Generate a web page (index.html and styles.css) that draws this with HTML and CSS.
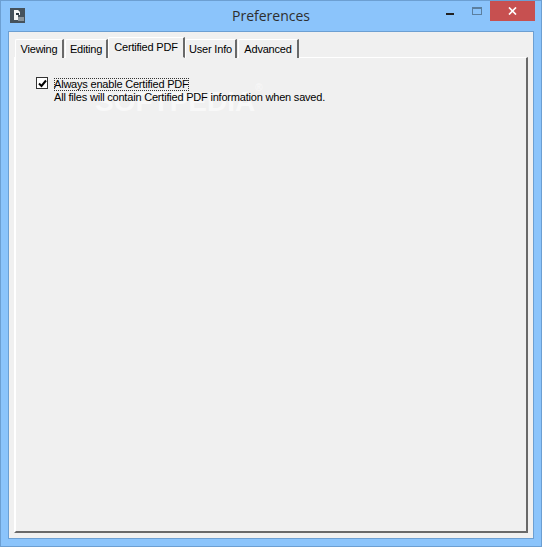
FILE: index.html
```html
<!DOCTYPE html>
<html lang="en">
<head>
    <meta charset="UTF-8">
    <meta name="viewport" content="width=device-width, initial-scale=1.0">
    <title>Preferences</title>
    <link rel="stylesheet" href="styles.css">
</head>
<body>
    <div class="window">
        <!-- Title bar -->
        <div class="titlebar">
            <svg class="app-icon" width="15" height="15" viewBox="0 0 15 15">
                <rect width="15" height="15" fill="#45525c"/>
                <path d="M4 2h4l2 2v3H8v5H4z" fill="#f4f6f7"/>
                <rect x="6" y="5" width="3" height="2" fill="#2c3a44"/>
                <rect x="8" y="9" width="6" height="4" fill="#8a949b"/>
            </svg>
            <div class="title">Preferences</div>
            <div class="controls">
                <div class="btn-min"><span class="min-glyph"></span></div>
                <div class="btn-max"><span class="max-glyph"></span></div>
                <div class="btn-close">
                    <svg width="9" height="8" viewBox="0 0 9 8">
                        <path d="M1 .5l7 7M8 .5l-7 7" stroke="#fff" stroke-width="1.7" fill="none"/>
                    </svg>
                </div>
            </div>
        </div>

        <!-- Client area -->
        <div class="client">
            <div class="tabs">
                <div class="tab tab-viewing">Viewing</div>
                <div class="tab tab-editing">Editing</div>
                <div class="tab tab-active">Certified PDF</div>
                <div class="tab tab-user">User Info</div>
                <div class="tab tab-advanced">Advanced</div>
            </div>
            <div class="panel">
                <div class="watermark">SOFTPEDIA<span class="watermark-mark">®</span></div>
                <div class="option">
                    <div class="checkbox">
                        <svg width="9" height="9" viewBox="0 0 9 9">
                            <path d="M1 4.5l2.5 2.5L8 1.5" stroke="#000" stroke-width="2" fill="none"/>
                        </svg>
                    </div>
                    <div class="option-text">
                        <div class="option-label">Always enable Certified PDF</div>
                        <div class="option-note">All files will contain Certified PDF information when saved.</div>
                    </div>
                </div>
            </div>
        </div>
    </div>
</body>
</html>
```

FILE: styles.css
```css
html, body {
    margin: 0;
    padding: 0;
}

body {
    width: 542px;
    height: 547px;
    overflow: hidden;
    font-family: "Liberation Sans", Arial, sans-serif;
    font-size: 11px;
    letter-spacing: -0.2px;
    color: #000;
}

.window {
    box-sizing: border-box;
    width: 542px;
    height: 547px;
    padding: 0 7px 7px 7px;
    background-color: #8bc4fb;
    border: 1px solid #6c9fd2;
    display: flex;
    flex-direction: column;
}

.titlebar {
    height: 30px;
    flex: none;
    display: flex;
    align-items: flex-start;
    position: relative;
}

.app-icon {
    margin: 7px 0 0 2px;
}

.title {
    position: absolute;
    left: 0;
    right: 0;
    top: 5px;
    text-align: center;
    font-family: "Open Sans", sans-serif;
    font-size: 14px;
    letter-spacing: 0;
    line-height: 20px;
    color: #2e2e2e;
}

.controls {
    margin-left: auto;
    display: flex;
    margin-right: -1px;
}

.btn-min, .btn-max {
    width: 26px;
    height: 20px;
    position: relative;
}

.min-glyph {
    position: absolute;
    left: 8px;
    top: 12px;
    width: 8px;
    height: 2px;
    background-color: #222;
}

.max-glyph {
    position: absolute;
    left: 8px;
    top: 6px;
    width: 8px;
    height: 5px;
    border: 1px solid #5b7f9f;
    border-top-width: 2px;
}

.btn-close {
    width: 45px;
    height: 20px;
    background-color: #c75050;
    display: flex;
    align-items: center;
    justify-content: center;
}

.client {
    flex: 1;
    background-color: #f0f0f0;
    border: 1px solid #6c9fd2;
    padding: 5px;
    display: flex;
    flex-direction: column;
}

.tabs {
    height: 21px;
    flex: none;
    display: flex;
    align-items: flex-end;
    padding-left: 1px;
    position: relative;
    z-index: 1;
    margin-bottom: -1px;
}

.tab {
    box-sizing: border-box;
    height: 19px;
    padding-top: 2px;
    line-height: 14px;
    text-align: center;
    background-color: #f0f0f0;
    border-left: 1px solid #fff;
    border-top: 1px solid #fff;
    border-right: 2px solid #696969;
    margin-right: 1px;
    border-top-left-radius: 2px;
}

.tab-viewing { width: 49px; }
.tab-editing { width: 43px; }
.tab-user { width: 52px; }
.tab-advanced { width: 61px; }

.tab-active {
    width: 77px;
    height: 21px;
    margin-left: -1px;
    margin-right: 0;
    border-bottom: 1px solid #f0f0f0;
}

.panel {
    flex: 1;
    background-color: #f0f0f0;
    border-left: 2px solid #fff;
    border-top: 1px solid #fff;
    border-right: 2px solid #696969;
    border-bottom: 2px solid #696969;
    padding: 19px 20px;
    position: relative;
}

.watermark {
    position: absolute;
    left: 79px;
    top: 28px;
    font-size: 28px;
    font-weight: bold;
    letter-spacing: 0;
    color: #f8f8f8;
}

.watermark-mark {
    position: absolute;
    top: -4px;
    left: 100%;
    font-size: 10px;
    font-weight: normal;
}

.option {
    display: flex;
    gap: 6px;
    position: relative;
}

.checkbox {
    box-sizing: border-box;
    width: 12px;
    height: 12px;
    background-color: #fff;
    border: 1px solid #333;
    display: flex;
    align-items: center;
    justify-content: center;
}

.option-text {
    line-height: 13px;
    padding-top: 1px;
}

.option-label {
    display: inline-block;
    outline: 1px dotted #333;
    outline-offset: -1px;
}
```
